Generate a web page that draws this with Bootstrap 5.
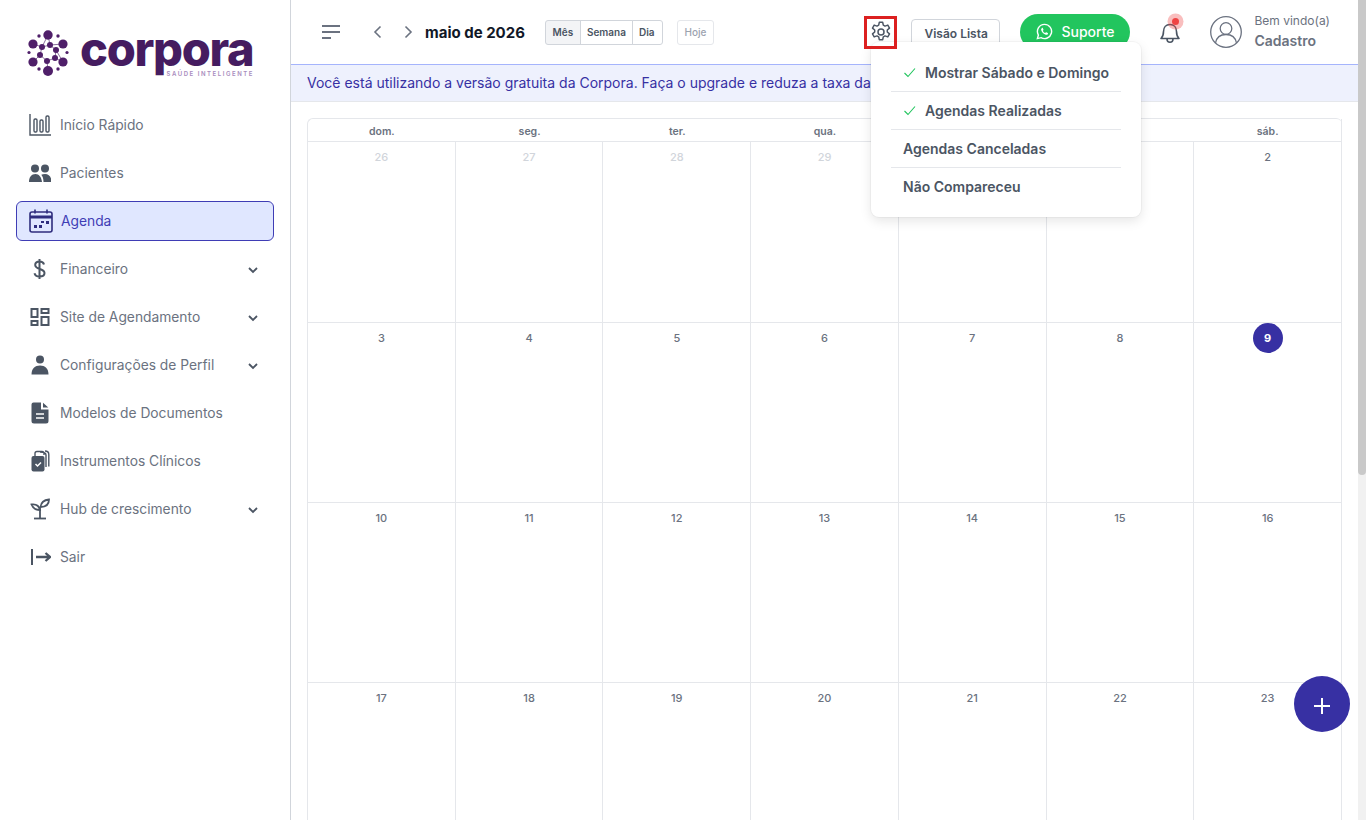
<!DOCTYPE html>
<html lang="pt-BR">
<head>
<meta charset="utf-8">
<title>Corpora - Agenda</title>
<link href="https://cdn.jsdelivr.net/npm/bootstrap@5.3.0/dist/css/bootstrap.min.css" rel="stylesheet">
<style>
html,body{height:100%;overflow:hidden;margin:0}
body{font-family:Inter,"Liberation Sans",sans-serif;color:#6b7280;background:#fff}
.shell{height:820px}
.side{width:291px;flex:none;border-right:1px solid #d1d5db;padding:0 16px}
.brand{height:105px;padding:30px 0 0 11px;gap:8px}
.brand-word{width:174px}
.brand-name{font-family:Inter,sans-serif;font-weight:800;font-size:47px;line-height:41px;letter-spacing:-1.3px;color:#451c60;margin-top:-2px;white-space:nowrap}
.brand-tag{font-size:6px;line-height:8px;letter-spacing:1.55px;font-weight:600;color:#a88bbd;text-align:right;margin-top:1px;white-space:nowrap}
.side-nav{gap:8px}
.side-link{height:40px;padding:0 15px 0 12px;gap:9px;font-size:13.8px;color:#6b7280;border:1px solid transparent;border-radius:6px;text-decoration:none}
.side-link svg.ico{width:22px;height:24px;flex:none;fill:#4b5563}
.side-link.on{background:#e0e7ff;border-color:#3f3db5;color:#3f3db5;padding-left:12px;gap:8px}
.side-link.on svg.ico{width:24px;height:24px}
.side-link .chev{margin-left:auto;width:12px;height:12px;margin-top:2px;margin-right:-1px}
.page{min-width:0;overflow:hidden;height:820px}
.rail{width:8px;flex:none;background:#f1f1f1;height:820px}
.rail-thumb{height:475px;background:#c9c9c9;border-radius:0 0 4px 4px}
.topbar{height:65px;border-bottom:1px solid #a5b4fc;padding:0 28px 0 30px;background:#fff}
.plain-btn{padding:0;border:0;background:none;line-height:0}
.menu-tgl{margin-right:32px}
.cal-prev{margin-right:22px}
.cal-next{margin-right:12px}
.cal-title{font-size:15px;font-weight:700;color:#111827;margin:0 20px 0 0;line-height:1;white-space:nowrap}
.view-group{margin-top:1px}
.view-group .btn{font-size:10px;font-weight:600;color:#4b5563;padding:0 6px;height:25px;line-height:23px;border-color:#d1d5db;border-radius:3px;background:#fff}
.view-group .btn.on{background:#f3f4f6;padding:0;width:36px}
.view-group .btn:last-child{padding:0 7px 0 6px}
.today{font-size:10px;font-weight:500;color:#9ca3af;border:1px solid #e5e7eb;border-radius:3px;height:25px;line-height:23px;padding:0 7px;margin:1px 0 0 14px;background:#fff}
.gear-box{width:33px;height:33px;border:3px solid #dc2020;margin-left:auto;margin-right:14px;position:relative;z-index:30}
.list-btn{font-size:12px;font-weight:600;color:#4b5563;border:1px solid #d1d5db;border-radius:4px;height:27px;padding:1px 12px 0;line-height:25px;background:#fff;margin-top:1px;width:89px;white-space:nowrap}
.support{background:#22c55e;color:#fff;border:0;border-radius:18px;height:36px;width:110px;margin-left:20px;font-size:14px;font-weight:500;gap:8px;padding:0 0 2px}
.bell{margin-left:29px;width:22px;height:24px;margin-top:-3px}
.bell .dot{position:absolute;left:12.5px;top:-1px;width:7px;height:7px;background:#ef4444;border-radius:50%;box-shadow:0 0 0 4.500px rgba(239,68,68,.35)}
.who{margin-left:29px;gap:12px}
.who-txt{line-height:1}
.who-top{font-size:12px;color:#6b7280;margin-bottom:7px;margin-top:-2px;white-space:nowrap}
.who-name{font-size:14px;font-weight:600;color:#6b7280}
.opts{position:absolute;left:871px;top:42px;width:270px;height:175px;min-width:0;padding:12px 20px;background:#fff;border:0;border-radius:8px;box-shadow:0 0 0 1px rgba(0,0,0,.03),0 4px 12px rgba(0,0,0,.1);z-index:20;display:block}
.opts li{height:38px;border-bottom:1px solid #e5e7eb}
.opts li:last-child{border-bottom:0}
.opts .dropdown-item{display:flex;align-items:center;height:37px;padding:0 12px;gap:9px;font-size:14px;font-weight:600;color:#4b5563;background:none;white-space:nowrap}
.notice{height:37px;background:#eef1fd;border-bottom:1px solid #e5e7eb;padding:0 16px;font-size:14px;color:#3730a3;line-height:36px;white-space:nowrap;overflow:hidden}
.cal-wrap{padding:16px 16px 0}
.cal-grid{display:grid;grid-template-columns:repeat(7,minmax(0,1fr));border-left:1px solid #e5e7eb;border-top:1px solid #e5e7eb;border-radius:6px 6px 0 0}
.dow{height:23px;border-bottom:1px solid #e5e7eb;font-size:10.5px;font-weight:600;color:#6b7280;text-align:center;line-height:25px}
.dow.last{border-right:1px solid #e5e7eb}
.day{height:180px;border-right:1px solid #e5e7eb;border-bottom:1px solid #e5e7eb;text-align:center;font-size:11px;font-weight:500;color:#6b7280;padding-top:8px;line-height:14px}
.day.first{height:181px}
.day.off{color:#d1d5db}
.today-num{display:block;width:30px;height:30px;margin:-8px auto 0;border-radius:50%;background:#3730a3;color:#fff;font-weight:700;line-height:30px}
.fab{position:fixed;left:1294px;top:676px;width:56px;height:56px;border-radius:50%;background:#3730a3;border:0;z-index:10;padding:0}
</style>
</head>
<body>
<div class="shell d-flex">
  <aside class="side">
    <div class="brand d-flex align-items-start">
      <svg width="45" height="47" viewBox="27 30 45 47" aria-hidden="true">
        <g fill="none" stroke="#6b4a82" stroke-width=".8"><path d="M48 35 42 47 33 44M48 35 50 45 63 44M42 47 40 55 33 62M50 45 56 50 63 62M40 55 47 61 48 71M56 50 55 58 47 61M42 47 50 45M55 58 63 62"/></g>
        <g fill="#4f1f69"><circle cx="48" cy="35" r="4.700"/><circle cx="33" cy="44" r="4.600"/><circle cx="63" cy="44" r="4.600"/><circle cx="33" cy="62" r="4.600"/><circle cx="63" cy="62" r="4.600"/><circle cx="48" cy="71" r="5"/><circle cx="42" cy="47" r="3"/><circle cx="50" cy="45" r="3"/><circle cx="56" cy="50" r="3"/><circle cx="40" cy="55" r="3"/><circle cx="55" cy="58" r="3"/><circle cx="47" cy="61" r="3"/><circle cx="39" cy="36" r="1.700"/><circle cx="58" cy="36" r="1.700"/><circle cx="29" cy="52.500" r="1.600"/><circle cx="67" cy="52.500" r="1.600"/><circle cx="39" cy="69" r="1.700"/><circle cx="58" cy="69" r="1.700"/></g>
      </svg>
      <div class="brand-word">
        <div class="brand-name">corpora</div>
        <div class="brand-tag">SAÚDE INTELIGENTE</div>
      </div>
    </div>
    <nav class="side-nav nav flex-column">
      <a class="side-link d-flex align-items-center" href="#"><svg class="ico" viewBox="0 0 22 24" aria-hidden="true" fill="none"><g fill="none" stroke="#4b5563" stroke-width="1.400"><path d="M1 1v21h21"/><rect x="5" y="6" width="3" height="13" rx="1.200"/><rect x="11" y="7" width="3" height="12" rx="1.200"/><rect x="17" y="3" width="3" height="16" rx="1.200"/></g></svg><span>Início Rápido</span></a>
      <a class="side-link d-flex align-items-center" href="#"><svg class="ico" viewBox="0 0 22 24" aria-hidden="true"><circle cx="6" cy="7.500" r="4"/><circle cx="16" cy="7.500" r="4"/><path d="M0 21c0-5 2.500-8 6.500-8 3.500 0 6 3 6.500 8zM14.500 21c0-3-.7-5.500-2.200-7.200 1-.5 2.200-.8 3.700-.8 4 0 6.500 3 6.500 8z"/></svg><span>Pacientes</span></a>
      <a class="side-link on d-flex align-items-center" href="#" aria-current="page"><svg class="ico" viewBox="0 0 24 24" aria-hidden="true" fill="none"><g stroke="#2f2d7e" fill="none"><rect x="1" y="3" width="22" height="20" rx="2" stroke-width="1.600"/><path d="M1 8h22" stroke-width="3"/><path d="M6 .5v4M18 .5v4" stroke-width="1.600"/></g><g fill="#2f2d7e"><rect x="5" y="16" width="3" height="3"/><rect x="10" y="16" width="3" height="3"/><rect x="12" y="12" width="3" height="2"/><rect x="17" y="12" width="3" height="3"/></g></svg><span>Agenda</span></a>
      <a class="side-link d-flex align-items-center" href="#"><svg class="ico" viewBox="0 0 22 24" aria-hidden="true" fill="none"><path d="M15 7.500C14.500 5.500 13.500 4.500 10.500 4.500c-3 0-4.300 1.500-4.300 3.500 0 5 9.300 3 9.300 8 0 2-1.800 3.500-5 3.500-2.700 0-4.500-1.200-5-3.300M10.500 2v20" fill="none" stroke="#4b5563" stroke-width="2"/></svg><span>Financeiro</span><svg class="chev" viewBox="0 0 12 12" aria-hidden="true"><path d="M2 4l4 4 4-4" fill="none" stroke="#4b5563" stroke-width="1.800"/></svg></a>
      <a class="side-link d-flex align-items-center" href="#"><svg class="ico" viewBox="0 0 22 24" aria-hidden="true" fill="none"><g fill="none" stroke="#4b5563" stroke-width="2"><rect x="2.500" y="4" width="6" height="8"/><rect x="12.500" y="4" width="7" height="4"/><rect x="2.500" y="16" width="6" height="4"/><rect x="12.500" y="12" width="7" height="8"/></g></svg><span>Site de Agendamento</span><svg class="chev" viewBox="0 0 12 12" aria-hidden="true"><path d="M2 4l4 4 4-4" fill="none" stroke="#4b5563" stroke-width="1.800"/></svg></a>
      <a class="side-link d-flex align-items-center" href="#"><svg class="ico" viewBox="0 0 22 24" aria-hidden="true"><circle cx="11" cy="6.500" r="4"/><path d="M2.500 21.500c0-6 3.500-9 8.500-9s8.500 3 8.500 9z"/></svg><span>Configurações de Perfil</span><svg class="chev" viewBox="0 0 12 12" aria-hidden="true"><path d="M2 4l4 4 4-4" fill="none" stroke="#4b5563" stroke-width="1.800"/></svg></a>
      <a class="side-link d-flex align-items-center" href="#"><svg class="ico" viewBox="0 0 22 24" aria-hidden="true"><path d="M4.500 1.500H12v7h7.500v11.500a2.500 2.500 0 0 1-2.500 2.500H5a2.500 2.500 0 0 1-2.500-2.500V3.500a2 2 0 0 1 2-2zM14 1.800 19.300 6.500H14z"/><path d="M7 13h8M7 17h8" stroke="#fff" stroke-width="1.500"/></svg><span>Modelos de Documentos</span></a>
      <a class="side-link d-flex align-items-center" href="#"><svg class="ico" viewBox="0 0 22 24" aria-hidden="true"><rect x="2.500" y="7" width="13" height="15.500" rx="2"/><path d="M6 8V4.500a2 2 0 0 1 2-2h5a2 2 0 0 1 2 2V6M11 3c4 0 6 1 6 3v12M16 2c2.500 0 3.800 1.500 3.800 3.500v12" fill="none" stroke="#4b5563" stroke-width="1.400"/><path d="M6.500 15l2 2 3.500-3.500" fill="none" stroke="#fff" stroke-width="1.500"/></svg><span>Instrumentos Clínicos</span></a>
      <a class="side-link d-flex align-items-center" href="#"><svg class="ico" viewBox="0 0 22 24" aria-hidden="true"><path d="M5 21.500h12" stroke="#4b5563" stroke-width="1.800"/><path d="M11 21.500V11" stroke="#4b5563" stroke-width="1.800"/><path d="M11 13C7 13 4 11.500 2.500 7.500 6.500 7 10 8.500 11 13zM11.500 10C12 5.500 15 3 20 2.500 20 7 17 10 11.500 10z" fill="none" stroke="#4b5563" stroke-width="1.800"/></svg><span>Hub de crescimento</span><svg class="chev" viewBox="0 0 12 12" aria-hidden="true"><path d="M2 4l4 4 4-4" fill="none" stroke="#4b5563" stroke-width="1.800"/></svg></a>
      <a class="side-link d-flex align-items-center" href="#"><svg class="ico" viewBox="0 0 22 24" aria-hidden="true" fill="none"><path d="M3 4v16" fill="none" stroke="#4b5563" stroke-width="2"/><path d="M7 12h14M16.500 8l4.500 4-4.500 4" fill="none" stroke="#4b5563" stroke-width="2.300"/></svg><span>Sair</span></a>
    </nav>
  </aside>
  <main class="page flex-grow-1">
    <header class="topbar d-flex align-items-center">
      <button class="plain-btn menu-tgl" type="button" aria-label="Menu"><svg width="20" height="16" viewBox="0 0 20 16" aria-hidden="true"><path d="M1 2h18M1 8h18M1 14h9" stroke="#6b7280" stroke-width="1.800" fill="none"/></svg></button>
      <button class="plain-btn cal-prev" type="button" aria-label="Anterior"><svg width="9" height="14" viewBox="0 0 9 14" aria-hidden="true"><path d="M7.500 1.500 2 7l5.500 5.500" fill="none" stroke="#6b7280" stroke-width="1.600"/></svg></button>
      <button class="plain-btn cal-next" type="button" aria-label="Próximo"><svg width="9" height="14" viewBox="0 0 9 14" aria-hidden="true"><path d="M1.500 1.500 7 7l-5.500 5.500" fill="none" stroke="#6b7280" stroke-width="1.600"/></svg></button>
      <h2 class="cal-title">maio de 2026</h2>
      <div class="btn-group view-group" role="group"><button class="btn on" type="button">Mês</button><button class="btn" type="button">Semana</button><button class="btn" type="button">Dia</button></div>
      <button class="today" type="button">Hoje</button>
      <button class="plain-btn gear-box d-flex align-items-center justify-content-center" type="button" aria-label="Configurações"><svg width="24" height="24" viewBox="0 0 24 24" aria-hidden="true" fill="none" stroke="#4b5563" stroke-width="1.500"><path d="M10.300 2.300h3.400l.6 2.900 1.700.9 2.800-1 1.700 3-2.200 1.900v2l2.200 1.900-1.700 3-2.800-1-1.700.9-.6 2.900h-3.400l-.6-2.900-1.700-.9-2.800 1-1.700-3 2.200-1.900v-2L3.500 8.100l1.700-3 2.800 1 1.700-.9z" stroke-linejoin="round"/><circle cx="12" cy="12" r="3"/></svg></button>
      <button class="list-btn" type="button">Visão Lista</button>
      <button class="support d-flex align-items-center justify-content-center" type="button"><svg width="17" height="17" viewBox="0 0 24 24" aria-hidden="true"><path d="M12 2a10 10 0 0 0-8.600 15L2 22l5.100-1.300A10 10 0 1 0 12 2z" fill="none" stroke="#fff" stroke-width="2"/><path d="M8.500 7c-1 .6-1.500 1.700-1.200 3 .6 2.800 3.700 5.900 6.500 6.600 1.300.3 2.500-.2 3-1.200.3-.5.200-1-.2-1.200l-2-1c-.4-.2-.7-.1-.9.200l-.6.800c-1.500-.5-2.900-1.900-3.500-3.400l.7-.7c.3-.3.3-.6.200-.9l-.9-2c-.2-.4-.7-.5-1.100-.200z" fill="#fff"/></svg><span>Suporte</span></button>
      <div class="bell position-relative"><svg width="22" height="24" viewBox="0 0 22 24" aria-hidden="true" fill="none" stroke="#4b5563" stroke-width="1.600"><path d="M2 18.500h18c-1.800-1.800-2.500-3-2.500-7 0-4-2.500-7-6.500-7s-6.500 3-6.500 7c0 4-.7 5.200-2.500 7zM8 19c0 2 1.200 3.300 3 3.300s3-1.300 3-3.300" stroke-linejoin="round"/></svg><span class="dot"></span></div>
      <div class="who d-flex align-items-center">
        <svg width="32" height="32" viewBox="0 0 32 32" aria-hidden="true" fill="none" stroke="#6b7280" stroke-width="1.300"><circle cx="16" cy="16" r="15.300"/><circle cx="16" cy="12.500" r="5.800"/><path d="M5.500 27c1-5.500 5-8.500 10.500-8.500S25.500 21.500 26.500 27"/></svg>
        <div class="who-txt"><div class="who-top">Bem vindo(a)</div><div class="who-name">Cadastro</div></div>
      </div>
    </header>
    <div class="notice">Você está utilizando a versão gratuita da Corpora. Faça o upgrade e reduza a taxa da</div>
    <section class="cal-wrap">
      <div class="cal-grid">
        <div class="dow">dom.</div><div class="dow">seg.</div><div class="dow">ter.</div><div class="dow">qua.</div><div class="dow">qui.</div><div class="dow">sex.</div><div class="dow last">sáb.</div>
        <div class="day first off">26</div><div class="day first off">27</div><div class="day first off">28</div><div class="day first off">29</div><div class="day first off">30</div><div class="day first">1</div><div class="day first">2</div>
        <div class="day">3</div><div class="day">4</div><div class="day">5</div><div class="day">6</div><div class="day">7</div><div class="day">8</div><div class="day"><span class="today-num">9</span></div>
        <div class="day">10</div><div class="day">11</div><div class="day">12</div><div class="day">13</div><div class="day">14</div><div class="day">15</div><div class="day">16</div>
        <div class="day">17</div><div class="day">18</div><div class="day">19</div><div class="day">20</div><div class="day">21</div><div class="day">22</div><div class="day">23</div>
      </div>
    </section>
  </main>
  <div class="rail" aria-hidden="true"><div class="rail-thumb"></div></div>
</div>
<ul class="opts dropdown-menu list-unstyled m-0">
  <li><a class="dropdown-item" href="#"><svg width="13" height="13" viewBox="0 0 13 13" aria-hidden="true"><path d="M1.500 7l3.500 3.500 7-8" fill="none" stroke="#22c55e" stroke-width="1.100"/></svg><span>Mostrar Sábado e Domingo</span></a></li>
  <li><a class="dropdown-item" href="#"><svg width="13" height="13" viewBox="0 0 13 13" aria-hidden="true"><path d="M1.500 7l3.500 3.500 7-8" fill="none" stroke="#22c55e" stroke-width="1.100"/></svg><span>Agendas Realizadas</span></a></li>
  <li><a class="dropdown-item" href="#">Agendas Canceladas</a></li>
  <li><a class="dropdown-item" href="#">Não Compareceu</a></li>
</ul>
<button class="fab" type="button" aria-label="Adicionar"><svg width="18" height="18" viewBox="0 0 18 18" aria-hidden="true"><path d="M9 1v16M1 9h16" stroke="#fff" stroke-width="2"/></svg></button>
<script src="https://cdn.jsdelivr.net/npm/bootstrap@5.3.0/dist/js/bootstrap.bundle.min.js"></script>
</body>
</html>
